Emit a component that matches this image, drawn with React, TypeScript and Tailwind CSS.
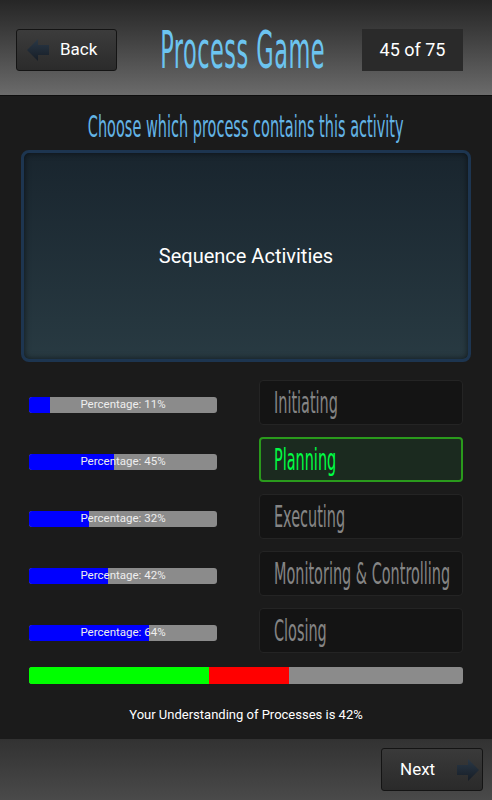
import React from 'react';

const condensed = { fontFamily: '"DejaVu Sans Condensed", "Liberation Sans Narrow", sans-serif' };
const roboto = { fontFamily: 'Roboto, "Noto Sans", sans-serif' };

const rows = [
  { pct: 11, label: 'Initiating', active: false },
  { pct: 45, label: 'Planning', active: true },
  { pct: 32, label: 'Executing', active: false },
  { pct: 42, label: 'Monitoring & Controlling', active: false },
  { pct: 64, label: 'Closing', active: false },
];

const ArrowIcon: React.FC<{ dir: 'left' | 'right' }> = ({ dir }) => (
  <svg width="24" height="24" viewBox="0 0 24 24" className={dir === 'right' ? 'scale-x-[-1]' : ''}>
    <defs>
      <linearGradient id={`ag-${dir}`} x1="0" y1="0" x2="0" y2="1">
        <stop offset="0" stopColor="#2a3846" />
        <stop offset="1" stopColor="#161d26" />
      </linearGradient>
    </defs>
    <polygon points="1,12 12,1 12,7 23,7 23,17 12,17 12,23" fill={`url(#ag-${dir})`} />
  </svg>
);

const App: React.FC = () => (
  <div className="w-[492px] h-[800px] flex flex-col bg-[#1b1b1b] overflow-hidden" style={roboto}>
    {/* header */}
    <div className="h-[96px] shrink-0 bg-gradient-to-b from-[#262626] to-[#6b6b6b] border-b border-[#0e0e0e] flex items-center pl-4 pr-[29px] pt-[4px]">
      <div className="shrink-0 w-[101px] h-[42px] rounded-[3px] border border-[#141414] bg-gradient-to-b from-[#3c3c3c] to-[#2b2b2b] flex items-center pl-[9px] gap-[10px]">
        <ArrowIcon dir="left" />
        <span className="text-white text-[17px]">Back</span>
      </div>
      <div className="flex-1 min-w-0 flex justify-center pl-[6px]">
        <span className="inline-block text-[#6cc4f0] text-[52px] leading-none scale-x-[0.48] whitespace-nowrap tracking-[1px]" style={condensed}>
          Process Game
        </span>
      </div>
      <div className="shrink-0 w-[101px] h-[42px] bg-[#2a2a2a] flex items-center justify-center text-white text-[18px] whitespace-nowrap">
        45 of 75
      </div>
    </div>

    {/* main */}
    <div className="flex-1 flex flex-col">
      <div className="h-[54px] flex items-center justify-center pt-[6px]">
        <span className="inline-block text-[#63b4e6] text-[31px] leading-none scale-x-[0.52] whitespace-nowrap" style={condensed}>
          Choose which process contains this activity
        </span>
      </div>
      <div className="mx-[21px] h-[212px] rounded-[8px] border-[3px] border-[#1d3550] bg-gradient-to-b from-[#19252e] to-[#283a42] shadow-[inset_0_0_6px_rgba(0,0,0,0.6)] flex items-center justify-center">
        <span className="text-white text-[20px]">Sequence Activities</span>
      </div>

      <div className="mt-[18px] flex flex-col gap-3">
        {rows.map((r) => (
          <div key={r.label} className="h-[45px] flex items-center">
            <div className="ml-[29px] w-[188px] h-[16px] rounded-[3px] bg-[#8b8b8b] relative overflow-hidden mt-[4px]">
              <div className="h-full bg-[#0000ff]" style={{ width: `${r.pct}%` }} />
              <div className="absolute inset-0 flex items-center justify-center text-[#eeeeee] text-[11.5px] leading-none">
                Percentage: {r.pct}%
              </div>
            </div>
            <div
              className={
                r.active
                  ? 'ml-[42px] w-[204px] h-[45px] rounded-[4px] border-2 border-[#2a9a1c] bg-[#1b2a1f] flex items-center pl-[13px] overflow-hidden'
                  : 'ml-[42px] w-[204px] h-[45px] rounded-[4px] border border-[#242424] bg-[#141414] flex items-center pl-[14px] overflow-hidden'
              }
            >
              <span
                className={
                  r.active
                    ? 'inline-block origin-left text-[#00ff44] text-[30px] leading-none scale-x-[0.535] whitespace-nowrap'
                    : 'inline-block origin-left text-[#858585] text-[30px] leading-none scale-x-[0.535] whitespace-nowrap'
                }
                style={condensed}
              >
                {r.label}
              </span>
            </div>
          </div>
        ))}
      </div>

      <div className="mt-[14px] mx-[29px] h-[17px] rounded-[3px] bg-[#8b8b8b] flex overflow-hidden">
        <div className="w-[180px] bg-[#00ff00]" />
        <div className="w-[80px] bg-[#ff0000]" />
      </div>
      <div className="mt-[21px] text-center text-white text-[13px]">Your Understanding of Processes is 42%</div>
    </div>

    {/* footer */}
    <div className="h-[61px] shrink-0 bg-gradient-to-b from-[#323232] to-[#4a4a4a] flex items-center justify-end pr-[9px]">
      <div className="w-[102px] h-[43px] rounded-[3px] border border-[#141414] bg-gradient-to-b from-[#3a3a3a] to-[#2a2a2a] flex items-center pl-[18px] justify-between pr-[2px]">
        <span className="text-white text-[17px]">Next</span>
        <ArrowIcon dir="right" />
      </div>
    </div>
  </div>
);

export default App;
